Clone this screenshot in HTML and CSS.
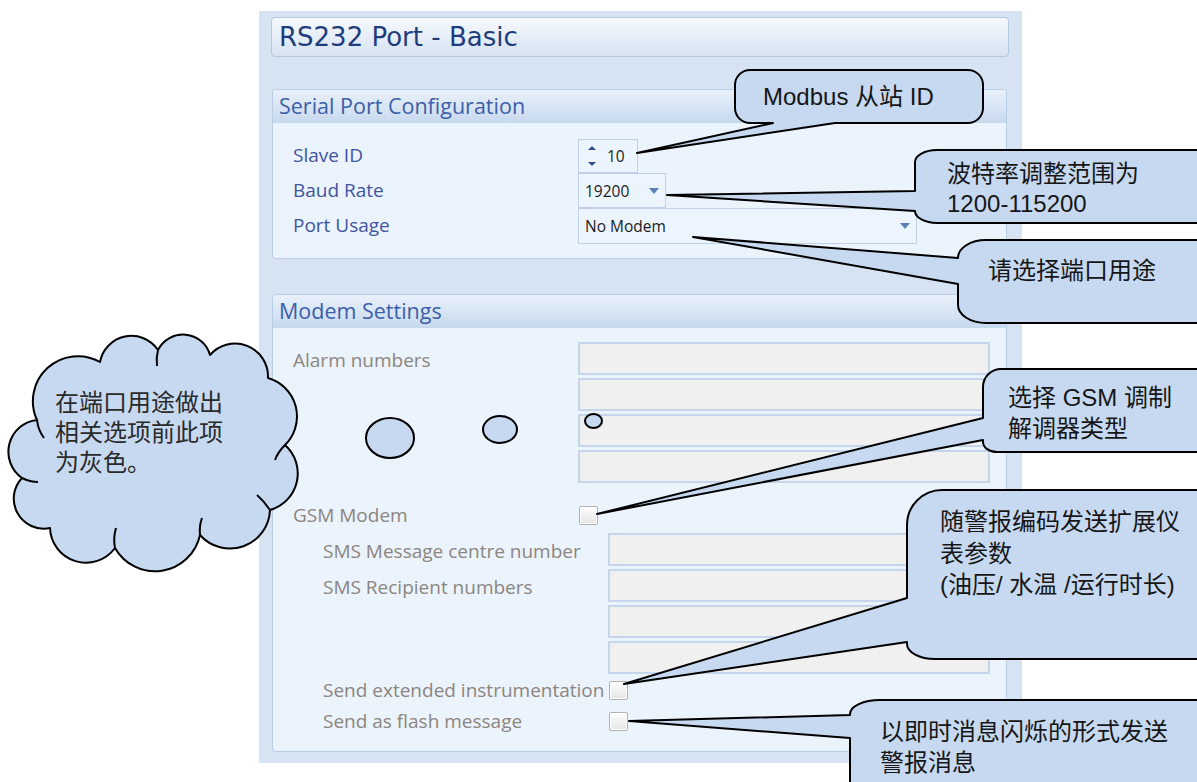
FILE: index.html
```html
<!DOCTYPE html>
<html lang="en">
<head>
<meta charset="utf-8">
<title>RS232 Port - Basic</title>
<link rel="stylesheet" href="styles.css">
</head>
<body>
<div class="panel">
  <div class="title">RS232 Port - Basic</div>

  <section class="group serial">
    <div class="group-head">Serial Port Configuration</div>
    <div class="group-body">
      <div class="row">
        <span class="label">Slave ID</span>
        <div class="spin">
          <span class="spin-arrows"><i class="up"></i><i class="down"></i></span>
          <span class="spin-val">10</span>
        </div>
      </div>
      <div class="row">
        <span class="label">Baud Rate</span>
        <div class="combo baud"><span>19200</span><i class="caret"></i></div>
      </div>
      <div class="row">
        <span class="label">Port Usage</span>
        <div class="combo usage"><span>No Modem</span><i class="caret"></i></div>
      </div>
    </div>
  </section>

  <section class="group modem">
    <div class="group-head">Modem Settings</div>
    <div class="group-body disabled">
      <div class="grid">
        <span class="label">Alarm numbers</span><div class="field"></div>
        <span></span><div class="field"></div>
        <span></span><div class="field"></div>
        <span></span><div class="field"></div>
      </div>
      <div class="check-row gsm">
        <span class="label">GSM Modem</span><span class="check"></span>
      </div>
      <div class="indent">
        <div class="grid">
          <span class="label">SMS Message centre number</span><div class="field"></div>
          <span class="label">SMS Recipient numbers</span><div class="field"></div>
          <span></span><div class="field"></div>
          <span></span><div class="field"></div>
        </div>
        <div class="check-row ext">
          <span class="label">Send extended instrumentation</span><span class="check"></span>
        </div>
        <div class="check-row flash">
          <span class="label">Send as flash message</span><span class="check"></span>
        </div>
      </div>
    </div>
  </section>
</div>

<svg class="notes" width="1197" height="782" viewBox="0 0 1197 782" xmlns="http://www.w3.org/2000/svg">
  <!-- cloud -->
  <path class="shape" d="M 37,420 A 45 45 0 0 1 100,362 A 32 32 0 0 1 158,350 A 28 28 0 0 1 210,355 A 33 33 0 0 1 268,378 A 40 40 0 0 1 285,445 A 38 38 0 0 1 270,510 A 40 40 0 0 1 200,535 A 46 46 0 0 1 115,548 A 36 36 0 0 1 50,528 A 30 30 0 0 1 22,478 A 32 32 0 0 1 37,420 Z"/>
  <path class="hook" d="M 37,420 Q 38,430 44,438"/>
  <path class="hook" d="M 22,478 Q 30,482 38,482"/>
  <path class="hook" d="M 115,548 Q 113,538 116,528"/>
  <path class="hook" d="M 200,535 Q 199,526 202,518"/>
  <path class="hook" d="M 270,510 Q 264,501 257,495"/>
  <path class="hook" d="M 285,445 Q 278,452 275,460"/>
  <path class="hook" d="M 158,350 Q 156,358 157,366"/>
  <ellipse class="shape" cx="390" cy="438" rx="24" ry="20"/>
  <ellipse class="shape" cx="500" cy="429.5" rx="17" ry="13.5"/>
  <ellipse class="shape" cx="593.5" cy="421" rx="8.5" ry="7"/>
  <text class="note-text cloud-text" x="55" y="411">在端口用途做出</text>
  <text class="note-text cloud-text" x="55" y="441">相关选项前此项</text>
  <text class="note-text cloud-text" x="55" y="471">为灰色。</text>

  <!-- Modbus callout -->
  <path class="shape" d="M 750,70 H 968 A 15 15 0 0 1 983,85 V 108 A 15 15 0 0 1 968,123 H 835 L 637,153 L 773,123 H 750 A 15 15 0 0 1 735,108 V 85 A 15 15 0 0 1 750,70 Z"/>
  <text class="note-text" x="763" y="105">Modbus 从站 ID</text>

  <!-- Baud callout -->
  <path class="shape" d="M 937,150 H 1215 V 223 H 937 A 22 12 0 0 1 915,211 L 667,195 L 915,191 V 162 A 22 12 0 0 1 937,150 Z"/>
  <text class="note-text" x="947" y="182">波特率调整范围为</text>
  <text class="note-text" x="947" y="212">1200-115200</text>

  <!-- Port usage callout -->
  <path class="shape" d="M 986,240 H 1215 V 323 H 986 A 28 18 0 0 1 958,305 V 284 L 693,237 L 958,258 A 28 18 0 0 1 986,240 Z"/>
  <text class="note-text" x="988" y="279">请选择端口用途</text>

  <!-- GSM callout -->
  <path class="shape" d="M 1001,369 H 1215 V 452 H 997 A 14 10 0 0 1 983,442 L 983,440 L 597,514 L 983,418 V 387 A 18 18 0 0 1 1001,369 Z"/>
  <text class="note-text" x="1008" y="406">选择 GSM 调制</text>
  <text class="note-text" x="1008" y="437">解调器类型</text>

  <!-- Instrumentation callout -->
  <path class="shape" d="M 942,490 H 1215 V 659 H 935 A 28 15 0 0 1 907,644 V 642 L 624,684 L 907,598 V 525 A 35 35 0 0 1 942,490 Z"/>
  <text class="note-text" x="940" y="530">随警报编码发送扩展仪</text>
  <text class="note-text" x="940" y="562">表参数</text>
  <text class="note-text" x="940" y="593">(油压/ 水温 /运行时长)</text>

  <!-- Flash callout -->
  <path class="shape" d="M 880,700 H 1215 V 800 H 850 V 738 L 629,721 L 850,715 V 714 A 30 14 0 0 1 880,700 Z"/>
  <text class="note-text" x="880" y="740">以即时消息闪烁的形式发送</text>
  <text class="note-text" x="880" y="771">警报消息</text>
</svg>
</body>
</html>
```

FILE: styles.css
```css
html, body {
  margin: 0;
  padding: 0;
}

body {
  position: relative;
  width: 1197px;
  height: 782px;
  overflow: hidden;
  background: #ffffff;
  font-family: "Open Sans", "Noto Sans", sans-serif;
}

.panel {
  box-sizing: border-box;
  width: 763px;
  height: 752px;
  margin: 11px 0 0 259px;
  padding: 6px 13px 0 12px;
  background: #d5e3f3;
}

.title {
  box-sizing: border-box;
  height: 40px;
  padding-left: 7px;
  border: 1px solid #b6c9df;
  border-radius: 4px;
  background: linear-gradient(#f6f9fd, #d6e3f2);
  font-family: "DejaVu Sans", sans-serif;
  font-size: 26px;
  line-height: 38px;
  color: #1f3d7c;
}

.group {
  margin: 32px 2px 0 1px;
  border: 1px solid #b9cde4;
  border-radius: 4px;
  background: #ebf3fc;
  overflow: hidden;
}

.group.modem {
  margin-top: 35px;
}

.group-head {
  height: 32px;
  padding-left: 6px;
  border-bottom: 1px solid #c6d8ec;
  background: linear-gradient(#e9f1fa, #c8daef);
  font-size: 21.5px;
  line-height: 32px;
  color: #3d5ea8;
}

.group-body {
  padding: 15px 16px 15px 20px;
}

.group.modem .group-body {
  padding-top: 14px;
}

.row {
  display: flex;
  align-items: center;
  height: 35px;
}

.label {
  flex: none;
  width: 285px;
  font-size: 19px;
  line-height: 33px;
  color: #3f55a0;
  white-space: nowrap;
}

.disabled .label {
  color: #8c8580;
}

/* spinner */
.spin {
  box-sizing: border-box;
  display: flex;
  align-items: center;
  width: 60px;
  height: 34px;
  padding-left: 9px;
  border: 1px solid #bed1e9;
  background: #ecf4fd;
}

.spin-arrows {
  display: flex;
  flex-direction: column;
  gap: 12px;
}

.spin-arrows i {
  display: block;
  width: 0;
  height: 0;
  border-left: 4px solid transparent;
  border-right: 4px solid transparent;
}

.spin-arrows .up {
  border-bottom: 4px solid #2f4f8f;
}

.spin-arrows .down {
  border-top: 4px solid #2f4f8f;
}

.spin-val {
  margin-left: 11px;
  font-size: 15.5px;
  color: #1c1c1c;
}

/* combo boxes */
.combo {
  box-sizing: border-box;
  display: flex;
  align-items: center;
  justify-content: space-between;
  height: 35px;
  padding: 0 6px 0 6px;
  border: 1px solid #bed1e9;
  background: #ecf4fd;
  font-size: 15.5px;
  color: #1c1c1c;
}

.combo.baud {
  width: 88px;
}

.combo.usage {
  width: 339px;
  height: 36px;
}

.caret {
  display: block;
  width: 0;
  height: 0;
  border-left: 5px solid transparent;
  border-right: 5px solid transparent;
  border-top: 6px solid #5b80b9;
}

/* modem fields */
.grid {
  display: grid;
  grid-template-columns: 285px 1fr;
  grid-auto-rows: 33px;
  row-gap: 3px;
}

.grid .label {
  line-height: 36px;
}

.field {
  box-sizing: border-box;
  border: 2px solid #c4d6ec;
  background: #f0f0f0;
}

.check-row {
  display: flex;
  align-items: center;
}

.check-row.gsm {
  height: 36px;
  margin-top: 14px;
}

.check-row.ext {
  height: 32px;
}

.check-row.flash {
  height: 30px;
}

.check {
  box-sizing: border-box;
  width: 19px;
  height: 19px;
  margin-left: 1px;
  border: 1px solid #b2b2b2;
  border-radius: 2px;
  background: linear-gradient(#fdfdfd, #e6e6e6);
  box-shadow: inset 0 0 0 1px #ffffff;
}

.indent {
  margin-left: 30px;
}

/* annotation overlay */
.notes {
  position: absolute;
  left: 0;
  top: 0;
  pointer-events: none;
}

.shape {
  fill: #c6d9f1;
  stroke: #000000;
  stroke-width: 2;
  stroke-linejoin: round;
}

.hook {
  fill: none;
  stroke: #000000;
  stroke-width: 2;
}

.note-text {
  font-family: "Liberation Sans", "Noto Sans CJK SC", sans-serif;
  font-size: 24px;
  fill: #161616;
}

.cloud-text {
  fill: #2a2a2a;
}
```
